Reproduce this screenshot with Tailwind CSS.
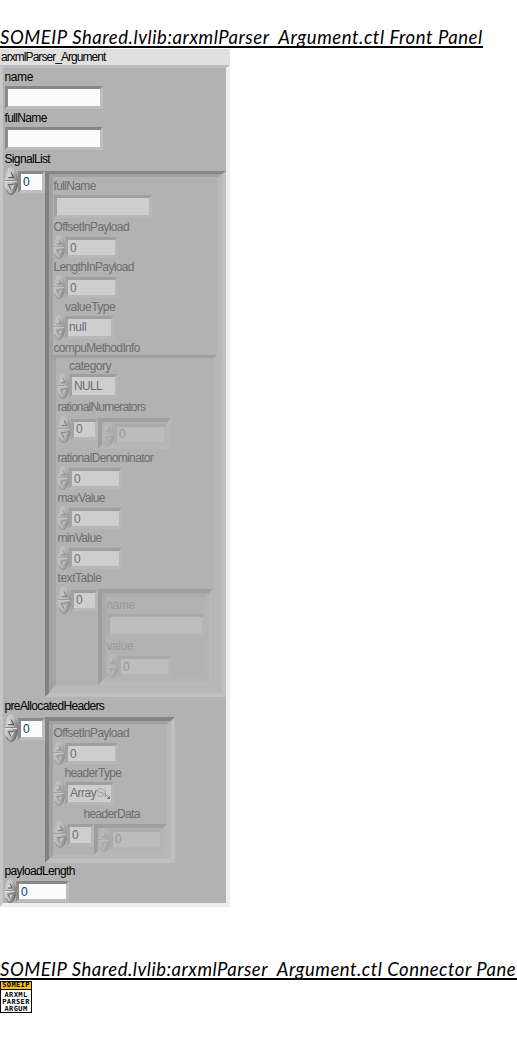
<!DOCTYPE html>
<html lang="en">
<head>
<meta charset="utf-8">
<title>arxmlParser_Argument.ctl</title>
<script src="https://cdn.jsdelivr.net/npm/@tailwindcss/browser@4"></script>
</head>
<body class="bg-white w-[517px] h-[1038px] overflow-hidden font-['Liberation_Sans',sans-serif] text-[12px] leading-[14px] tracking-[-0.65px] text-black whitespace-nowrap">
<svg width="0" height="0" class="absolute">
  <defs>
    <linearGradient id="g" x1="0" x2="1" y1="0" y2="0.4"><stop offset="0" stop-color="#929292"/><stop offset="0.3" stop-color="#cfcfcf"/><stop offset="0.65" stop-color="#bcbcbc"/><stop offset="1" stop-color="#777"/></linearGradient>
  </defs>
  <symbol id="spin" viewBox="0 0 13 28" preserveAspectRatio="none">
    <ellipse cx="6.5" cy="14" rx="6.4" ry="13.7" fill="url(#g)"/>
    <path d="M2 22.5Q4 27.5 6.5 27.5Q11 27 12.6 17" fill="none" stroke="#686868" stroke-width="0.9"/>
    <path d="M1 13.5H12" stroke="#8a8a8a"/><path d="M1 14.5H12" stroke="#dedede"/>
    <path d="M4 10.5L6.5 5.5" stroke="#e8e8e8" fill="none"/><path d="M6.5 5.5L9 10.5H4" stroke="#555" fill="none"/>
    <path d="M9 17.5L6.5 22.5" stroke="#e8e8e8" fill="none"/><path d="M9 17.5H4L6.5 22.5" stroke="#666" fill="none"/>
  </symbol>
</svg>

<div class="pt-[28px]">
  <h1 class="w-[483px] h-[20px] overflow-hidden border-b-2 border-black font-['Lato',sans-serif] italic text-[18.5px] leading-[18px] tracking-[0.55px]">SOMEIP Shared.lvlib:arxmlParser_Argument.ctl Front Panel</h1>
</div>

<main class="mt-px w-[230px] h-[858px] bg-[#b2b2b2] flex flex-col">
  <div class="h-[16px] bg-[#e0e0e0] pl-px leading-[16px] shrink-0 tracking-[-0.95px]">arxmlParser_Argument</div>
  <div class="h-[842px] border-t-[3px] border-l-[3px] border-r-4 border-b-4 border-t-[#bcbcbc] border-l-[#c6c6c6] border-r-[#eeeeee] border-b-[#eeeeee] pt-[2px]">
    <div class="pl-[1.5px] h-[14px] tracking-[-0.4px]">name</div>
    <div class="mt-[2px] ml-[2px] w-[98px] h-[23px] border-[3px] border-t-[#878787] border-l-[#8c8c8c] border-r-[#bebebe] border-b-[#bebebe] bg-[#fbfbfb]"></div>
    <div class="pl-[1.5px] mt-[2px] h-[14px]">fullName</div>
    <div class="mt-[2px] ml-[2px] w-[98px] h-[23px] border-[3px] border-t-[#878787] border-l-[#8c8c8c] border-r-[#bebebe] border-b-[#bebebe] bg-[#fbfbfb]"></div>
    <div class="pl-[1.5px] mt-[2px] h-[14px]">SignalList</div>

    <div class="flex items-start h-[531px] pl-px">
      <svg class="w-[14px] h-[28px] mt-px shrink-0"><use href="#spin"/></svg>
      <div class="mt-[5px] w-[27px] h-[22px] border-[3px] border-t-[#8a8a8a] border-l-[#8a8a8a] border-r-[#bebebe] border-b-[#bebebe] bg-[#fbfbfb] pl-[2px] leading-[17px] text-[#123a66] shrink-0">0</div>
      <section class="mt-[5px] w-[181px] h-[526px] shrink-0 border-4 border-t-[3px] border-t-[#868686] border-l-[#828282] border-r-[#bfbfbf] border-b-[#bfbfbf]">
        <div class="w-[173px] h-[519px] border-4 border-t-[3px] border-b-[5px] border-t-[#a1a1a1] border-l-[#a1a1a1] border-r-[#b8b8b8] border-b-[#b8b8b8] text-[#6d6d6d] pt-[2px]">
          <div class="h-[14px] pl-[0.5px]">fullName</div>
          <div class="mt-[2px] ml-px w-[98px] h-[23px] border-[3px] border-t-[#9f9f9f] border-l-[#a2a2a2] border-r-[#b7b7b7] border-b-[#b7b7b7] bg-[#cecece]"></div>
          <div class="mt-[2px] h-[14px] pl-[0.5px]">OffsetInPayload</div>
          <div class="mt-px flex h-[24px]"><svg class="w-[12px] h-[24px] opacity-50"><use href="#spin"/></svg><div class="mt-[2px] w-[53px] h-[21px] border-[3px] border-t-[#9f9f9f] border-l-[#a2a2a2] border-r-[#b7b7b7] border-b-[#b7b7b7] bg-[#cecece] pl-[2px] leading-[16px] text-[#786d66]">0</div></div>
          <div class="mt-px h-[14px] pl-[0.5px]">LengthInPayload</div>
          <div class="mt-px flex h-[24px]"><svg class="w-[12px] h-[24px] opacity-50"><use href="#spin"/></svg><div class="mt-[2px] w-[53px] h-[21px] border-[3px] border-t-[#9f9f9f] border-l-[#a2a2a2] border-r-[#b7b7b7] border-b-[#b7b7b7] bg-[#cecece] pl-[2px] leading-[16px] text-[#786d66]">0</div></div>
          <div class="mt-px h-[14px] pl-[12px] tracking-[-0.5px]">valueType</div>
          <div class="flex h-[26px]"><svg class="w-[12px] h-[26px] opacity-50"><use href="#spin"/></svg><div class="mt-[2px] w-[49px] h-[23px] border-[3px] border-t-[#9f9f9f] border-l-[#a2a2a2] border-r-[#b7b7b7] border-b-[#b7b7b7] bg-[#cecece] pl-[1px] leading-[17px] text-[#6d6d80] tracking-[-0.35px]">null</div></div>
          <div class="mt-px h-[14px] pl-[0.5px]">compuMethodInfo</div>

          <section class="w-[164px] h-[333px] border-[3px] border-t-[#9f9f9f] border-l-[#a4a4a4] border-r-[#b7b7b7] border-b-[#b7b7b7] pt-px pl-px">
            <div class="h-[14px] pl-[12px] tracking-[-0.5px]">category</div>
            <div class="flex h-[26px]"><svg class="w-[12px] h-[26px] opacity-50"><use href="#spin"/></svg><div class="mt-px w-[49px] h-[24px] border-[3px] border-t-[#9f9f9f] border-l-[#a2a2a2] border-r-[#b7b7b7] border-b-[#b7b7b7] bg-[#cecece] pl-[2px] leading-[18px] tracking-[-0.7px]">NULL</div></div>
            <div class="mt-px h-[14px] pl-[0.5px] tracking-[-0.8px]">rationalNumerators</div>
            <div class="mt-px flex items-start h-[34px]">
              <svg class="w-[14px] h-[28px] opacity-50 shrink-0"><use href="#spin"/></svg>
              <div class="mt-[4px] w-[27px] h-[21px] border-[3px] border-t-[#9f9f9f] border-l-[#a2a2a2] border-r-[#b7b7b7] border-b-[#b7b7b7] bg-[#cecece] pl-[2px] leading-[15px] text-[#786d66] shrink-0">0</div>
              <div class="mt-[3px] w-[73px] h-[31px] border-4 border-t-[#9f9f9f] border-l-[#9f9f9f] border-r-[#b7b7b7] border-b-[#b7b7b7] flex shrink-0"><svg class="w-[12px] h-[24px] opacity-25 shrink-0"><use href="#spin"/></svg><div class="mt-[2px] w-[53px] h-[21px] border-[3px] border-t-[#ababab] border-l-[#acacac] border-r-[#b5b5b5] border-b-[#b5b5b5] bg-[#bcbcbc] pl-[2px] leading-[15px] text-[#999]">0</div></div>
            </div>
            <div class="mt-[2px] h-[14px] pl-[0.5px]">rationalDenominator</div>
            <div class="mt-px flex h-[24px]"><svg class="w-[12px] h-[24px] opacity-50"><use href="#spin"/></svg><div class="mt-[2px] w-[53px] h-[21px] border-[3px] border-t-[#9f9f9f] border-l-[#a2a2a2] border-r-[#b7b7b7] border-b-[#b7b7b7] bg-[#cecece] pl-[2px] leading-[16px] text-[#786d66]">0</div></div>
            <div class="mt-px h-[14px] pl-[0.5px]">maxValue</div>
            <div class="mt-px flex h-[24px]"><svg class="w-[12px] h-[24px] opacity-50"><use href="#spin"/></svg><div class="mt-[2px] w-[53px] h-[21px] border-[3px] border-t-[#9f9f9f] border-l-[#a2a2a2] border-r-[#b7b7b7] border-b-[#b7b7b7] bg-[#cecece] pl-[2px] leading-[16px] text-[#786d66]">0</div></div>
            <div class="mt-px h-[14px] pl-[0.5px]">minValue</div>
            <div class="mt-px flex h-[24px]"><svg class="w-[12px] h-[24px] opacity-50"><use href="#spin"/></svg><div class="mt-[2px] w-[53px] h-[21px] border-[3px] border-t-[#9f9f9f] border-l-[#a2a2a2] border-r-[#b7b7b7] border-b-[#b7b7b7] bg-[#cecece] pl-[2px] leading-[16px] text-[#786d66]">0</div></div>
            <div class="mt-px h-[14px] pl-[0.5px] tracking-[-0.45px]">textTable</div>
            <div class="mt-px flex items-start h-[99px]">
              <svg class="w-[14px] h-[28px] opacity-50 shrink-0"><use href="#spin"/></svg>
              <div class="mt-[4px] w-[27px] h-[21px] border-[3px] border-t-[#9f9f9f] border-l-[#a2a2a2] border-r-[#b7b7b7] border-b-[#b7b7b7] bg-[#cecece] pl-[2px] leading-[15px] text-[#786d66] shrink-0">0</div>
              <section class="mt-[3px] w-[115px] h-[96px] shrink-0 border-4 border-t-[#9e9e9e] border-l-[#9e9e9e] border-r-[#b8b8b8] border-b-[#b8b8b8]">
                <div class="w-[107px] h-[88px] border-4 border-t-[#ababab] border-l-[#ababab] border-r-[#b4b4b4] border-b-[#b4b4b4] text-[#999] pt-px">
                  <div class="h-[14px] pl-[0.5px] tracking-[-0.4px]">name</div>
                  <div class="mt-[2px] ml-px w-[98px] h-[23px] border-[3px] border-t-[#a9a9a9] border-l-[#ababab] border-r-[#b5b5b5] border-b-[#b5b5b5] bg-[#bdbdbd]"></div>
                  <div class="mt-[2px] h-[14px] pl-[0.5px] tracking-[-0.4px]">value</div>
                  <div class="mt-px flex h-[24px]"><svg class="w-[12px] h-[24px] opacity-25"><use href="#spin"/></svg><div class="mt-[2px] w-[53px] h-[21px] border-[3px] border-t-[#a9a9a9] border-l-[#ababab] border-r-[#b5b5b5] border-b-[#b5b5b5] bg-[#bdbdbd] pl-[2px] leading-[16px]">0</div></div>
                </div>
              </section>
            </div>
          </section>
        </div>
      </section>
    </div>

    <div class="pl-[1.5px] mt-[2px] h-[14px]">preAllocatedHeaders</div>
    <div class="mt-px flex items-start h-[149px] pl-px">
      <svg class="w-[14px] h-[28px] shrink-0"><use href="#spin"/></svg>
      <div class="mt-[4px] w-[27px] h-[22px] border-[3px] border-t-[#8a8a8a] border-l-[#8a8a8a] border-r-[#bebebe] border-b-[#bebebe] bg-[#fbfbfb] pl-[2px] leading-[16px] text-[#123a66] shrink-0">0</div>
      <section class="mt-[3px] w-[130px] h-[146px] shrink-0 border-4 border-t-[#868686] border-l-[#828282] border-r-[#bfbfbf] border-b-[#bfbfbf]">
        <div class="w-[122px] h-[138px] border-4 border-t-[3px] border-t-[#a1a1a1] border-l-[#a1a1a1] border-r-[#b8b8b8] border-b-[#b8b8b8] text-[#6d6d6d] pt-[2px]">
          <div class="h-[14px] pl-[0.5px]">OffsetInPayload</div>
          <div class="mt-px flex h-[24px]"><svg class="w-[12px] h-[24px] opacity-50"><use href="#spin"/></svg><div class="mt-[2px] w-[53px] h-[21px] border-[3px] border-t-[#9f9f9f] border-l-[#a2a2a2] border-r-[#b7b7b7] border-b-[#b7b7b7] bg-[#cecece] pl-[2px] leading-[16px] text-[#786d66]">0</div></div>
          <div class="mt-px h-[14px] pl-[11.5px]">headerType</div>
          <div class="flex h-[26px]"><svg class="w-[12px] h-[26px] opacity-50"><use href="#spin"/></svg><div class="mt-[2px] w-[49px] h-[23px] border-[3px] border-t-[#9f9f9f] border-l-[#a2a2a2] border-r-[#b7b7b7] border-b-[#b7b7b7] bg-[#cecece] pl-[2px] leading-[17px] flex tracking-[-0.5px]"><span>Array</span><span class="text-[#a6a6a6] w-[9px]">Si</span><svg class="w-[7px] h-[9px] mt-[7px]" viewBox="0 0 7 9"><path d="M0 1.500L4.500 6" stroke="#777" fill="none"/><path d="M6 3.500V7.500H2z" fill="#777"/></svg></div></div>
          <div class="mt-px h-[13px] pl-[30.5px]">headerData</div>
          <div class="flex items-start h-[35px]">
            <svg class="w-[14px] h-[28px] opacity-50 shrink-0"><use href="#spin"/></svg>
            <div class="mt-[4px] w-[27px] h-[22px] border-[3px] border-t-[#9f9f9f] border-l-[#a2a2a2] border-r-[#b7b7b7] border-b-[#b7b7b7] bg-[#cecece] pl-[2px] leading-[16px] text-[#786d66] shrink-0">0</div>
            <div class="mt-[4px] w-[73px] h-[31px] border-4 border-t-[#9f9f9f] border-l-[#9f9f9f] border-r-[#b7b7b7] border-b-[#b7b7b7] flex shrink-0"><svg class="w-[12px] h-[24px] opacity-25 shrink-0"><use href="#spin"/></svg><div class="mt-[1px] w-[53px] h-[21px] border-[3px] border-t-[#ababab] border-l-[#acacac] border-r-[#b5b5b5] border-b-[#b5b5b5] bg-[#bcbcbc] pl-[2px] leading-[15px] text-[#999]">0</div></div>
          </div>
        </div>
      </section>
    </div>

    <div class="pl-[1.5px] mt-px h-[14px]">payloadLength</div>
    <div class="mt-px flex h-[24px] pl-px"><svg class="w-[12px] h-[24px]"><use href="#spin"/></svg><div class="mt-[2px] w-[53px] h-[21px] border-[3px] border-t-[#878787] border-l-[#8c8c8c] border-r-[#bebebe] border-b-[#bebebe] bg-[#fbfbfb] pl-[2px] leading-[16px] text-[#123a66]">0</div></div>
  </div>
</main>

<h2 class="mt-[53px] w-[517px] h-[20px] overflow-hidden border-b-2 border-black font-['Lato',sans-serif] italic text-[18.5px] leading-[18px] tracking-[0.5px]">SOMEIP Shared.lvlib:arxmlParser_Argument.ctl Connector Pane</h2>
<div class="mt-px w-[32px] h-[32px] border border-black bg-white font-['DejaVu_Sans_Mono',monospace] font-bold text-[7px] leading-[7px] tracking-[0.4px] text-center">
  <div class="h-[8px] bg-[#ffc000] border-b border-black">SOMEIP</div>
  <div class="mt-[2px] h-[7px]">ARXML</div>
  <div class="h-[7px]">PARSER</div>
  <div class="h-[7px]">ARGUM</div>
</div>
</body>
</html>
